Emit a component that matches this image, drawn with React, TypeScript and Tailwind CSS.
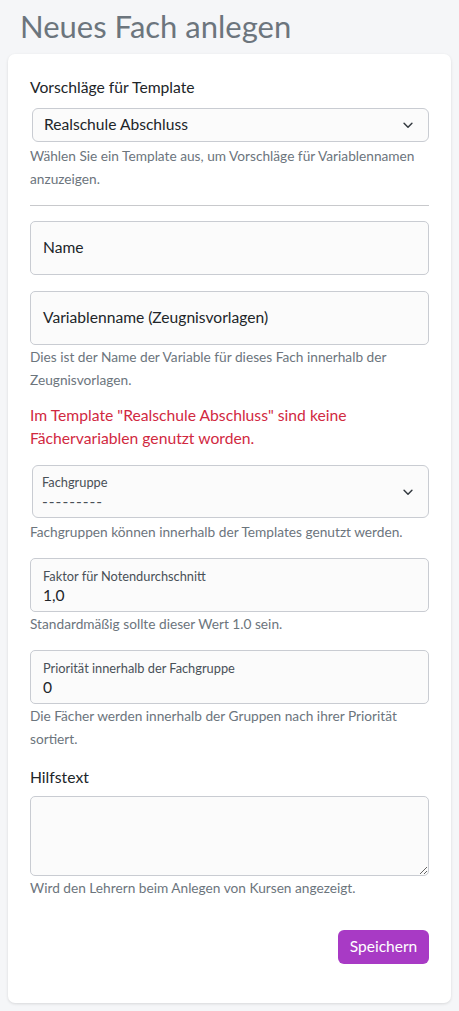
import React from "react";

const Chevron = () => (
    <svg width="14" height="14" viewBox="0 0 16 16" fill="none" className="shrink-0">
        <path d="M3.5 6l4.5 4.5L12.5 6" stroke="#343a40" strokeWidth="1.7" strokeLinecap="round" strokeLinejoin="round" />
    </svg>
);

const Help = ({ children, select }: { children: React.ReactNode; select?: boolean }) => (
    <p className={select ? "mt-[2px] text-[13.7px] leading-[23px] text-[#6c757d]" : "text-[13.7px] leading-[23px] text-[#6c757d]"}>
        {children}
    </p>
);

const FloatInput = ({ label, value }: { label: string; value: string }) => (
    <div className="h-[54px] rounded-[5px] border border-[#c9ccd2] bg-[#fbfbfb] px-[12px] pt-[9px]">
        <div className="text-[12.8px] leading-[16px] text-[#495057]">{label}</div>
        <div className="mt-[1px] text-[15.6px] leading-[20px] text-[#212529]">{value}</div>
    </div>
);

const PlainInput = ({ placeholder }: { placeholder: string }) => (
    <div className="flex h-[54px] items-center rounded-[5px] border border-[#c9ccd2] bg-[#fbfbfb] px-[12px] text-[15.6px] text-[#212529]">
        {placeholder}
    </div>
);

export default function App() {
    return (
        <div className="min-h-[1011px] bg-[#f5f6f8] pb-[9px] font-['Lato',sans-serif] text-[#212529]">
            <h1 className="px-[20px] pt-[6px] text-[31px] leading-[40px] text-[#6c757d]">Neues Fach anlegen</h1>
            <div className="mx-[8px] mt-[8px] rounded-[7px] bg-white px-[22px] pb-[39px] pt-[22px] shadow-[0_1px_3px_rgba(0,0,0,0.12)]">
                <label className="block text-[15.7px] leading-[22px]">Vorschläge für Template</label>
                <div className="ml-[2px] mt-[10px] flex h-[34px] items-center justify-between rounded-[6px] border border-[#c9ccd2] bg-[#fbfbfb] pl-[11px] pr-[13px]">
                    <span className="text-[15.6px]">Realschule Abschluss</span>
                    <Chevron />
                </div>
                <Help select>Wählen Sie ein Template aus, um Vorschläge für Variablennamen anzuzeigen.</Help>

                <hr className="mb-[15px] mt-[15px] border-[#c8c9cc]" />

                <PlainInput placeholder="Name" />
                <div className="mt-[16px]">
                    <PlainInput placeholder="Variablenname (Zeugnisvorlagen)" />
                </div>
                <Help>Dies ist der Name der Variable für dieses Fach innerhalb der Zeugnisvorlagen.</Help>

                <p className="mt-[13px] text-[15.7px] leading-[23px] text-[#d1293f]">
                    Im Template "Realschule Abschluss" sind keine Fächervariablen genutzt worden.
                </p>

                <div className="ml-[2px] mt-[15px] flex h-[53px] items-center justify-between rounded-[6px] border border-[#c9ccd2] bg-[#fbfbfb] pl-[9px] pr-[13px]">
                    <div>
                        <div className="text-[12.8px] leading-[16px] text-[#495057]">Fachgruppe</div>
                        <div className="mt-[2px] text-[15.6px] leading-[18px] tracking-[1px] text-[#495057]">---------</div>
                    </div>
                    <Chevron />
                </div>
                <Help select>Fachgruppen können innerhalb der Templates genutzt werden.</Help>

                <div className="mt-[15px]">
                    <FloatInput label="Faktor für Notendurchschnitt" value="1,0" />
                </div>
                <Help>Standardmäßig sollte dieser Wert 1.0 sein.</Help>

                <div className="mt-[15px]">
                    <FloatInput label="Priorität innerhalb der Fachgruppe" value="0" />
                </div>
                <Help>Die Fächer werden innerhalb der Gruppen nach ihrer Priorität sortiert.</Help>

                <label className="mt-[16px] block text-[15.7px] leading-[22px]">Hilfstext</label>
                <textarea
                    className="mt-[8px] block h-[80px] w-full resize-y rounded-[5px] border border-[#c9ccd2] bg-[#fbfbfb] px-[12px] py-[6px] text-[15px] outline-none"
                    defaultValue=""
                />
                <Help>Wird den Lehrern beim Anlegen von Kursen angezeigt.</Help>

                <div className="mt-[31px] flex justify-end">
                    <button className="h-[34px] w-[91px] rounded-[6px] bg-[#a83ac5] text-[15.5px] text-white">Speichern</button>
                </div>
            </div>
        </div>
    );
}
